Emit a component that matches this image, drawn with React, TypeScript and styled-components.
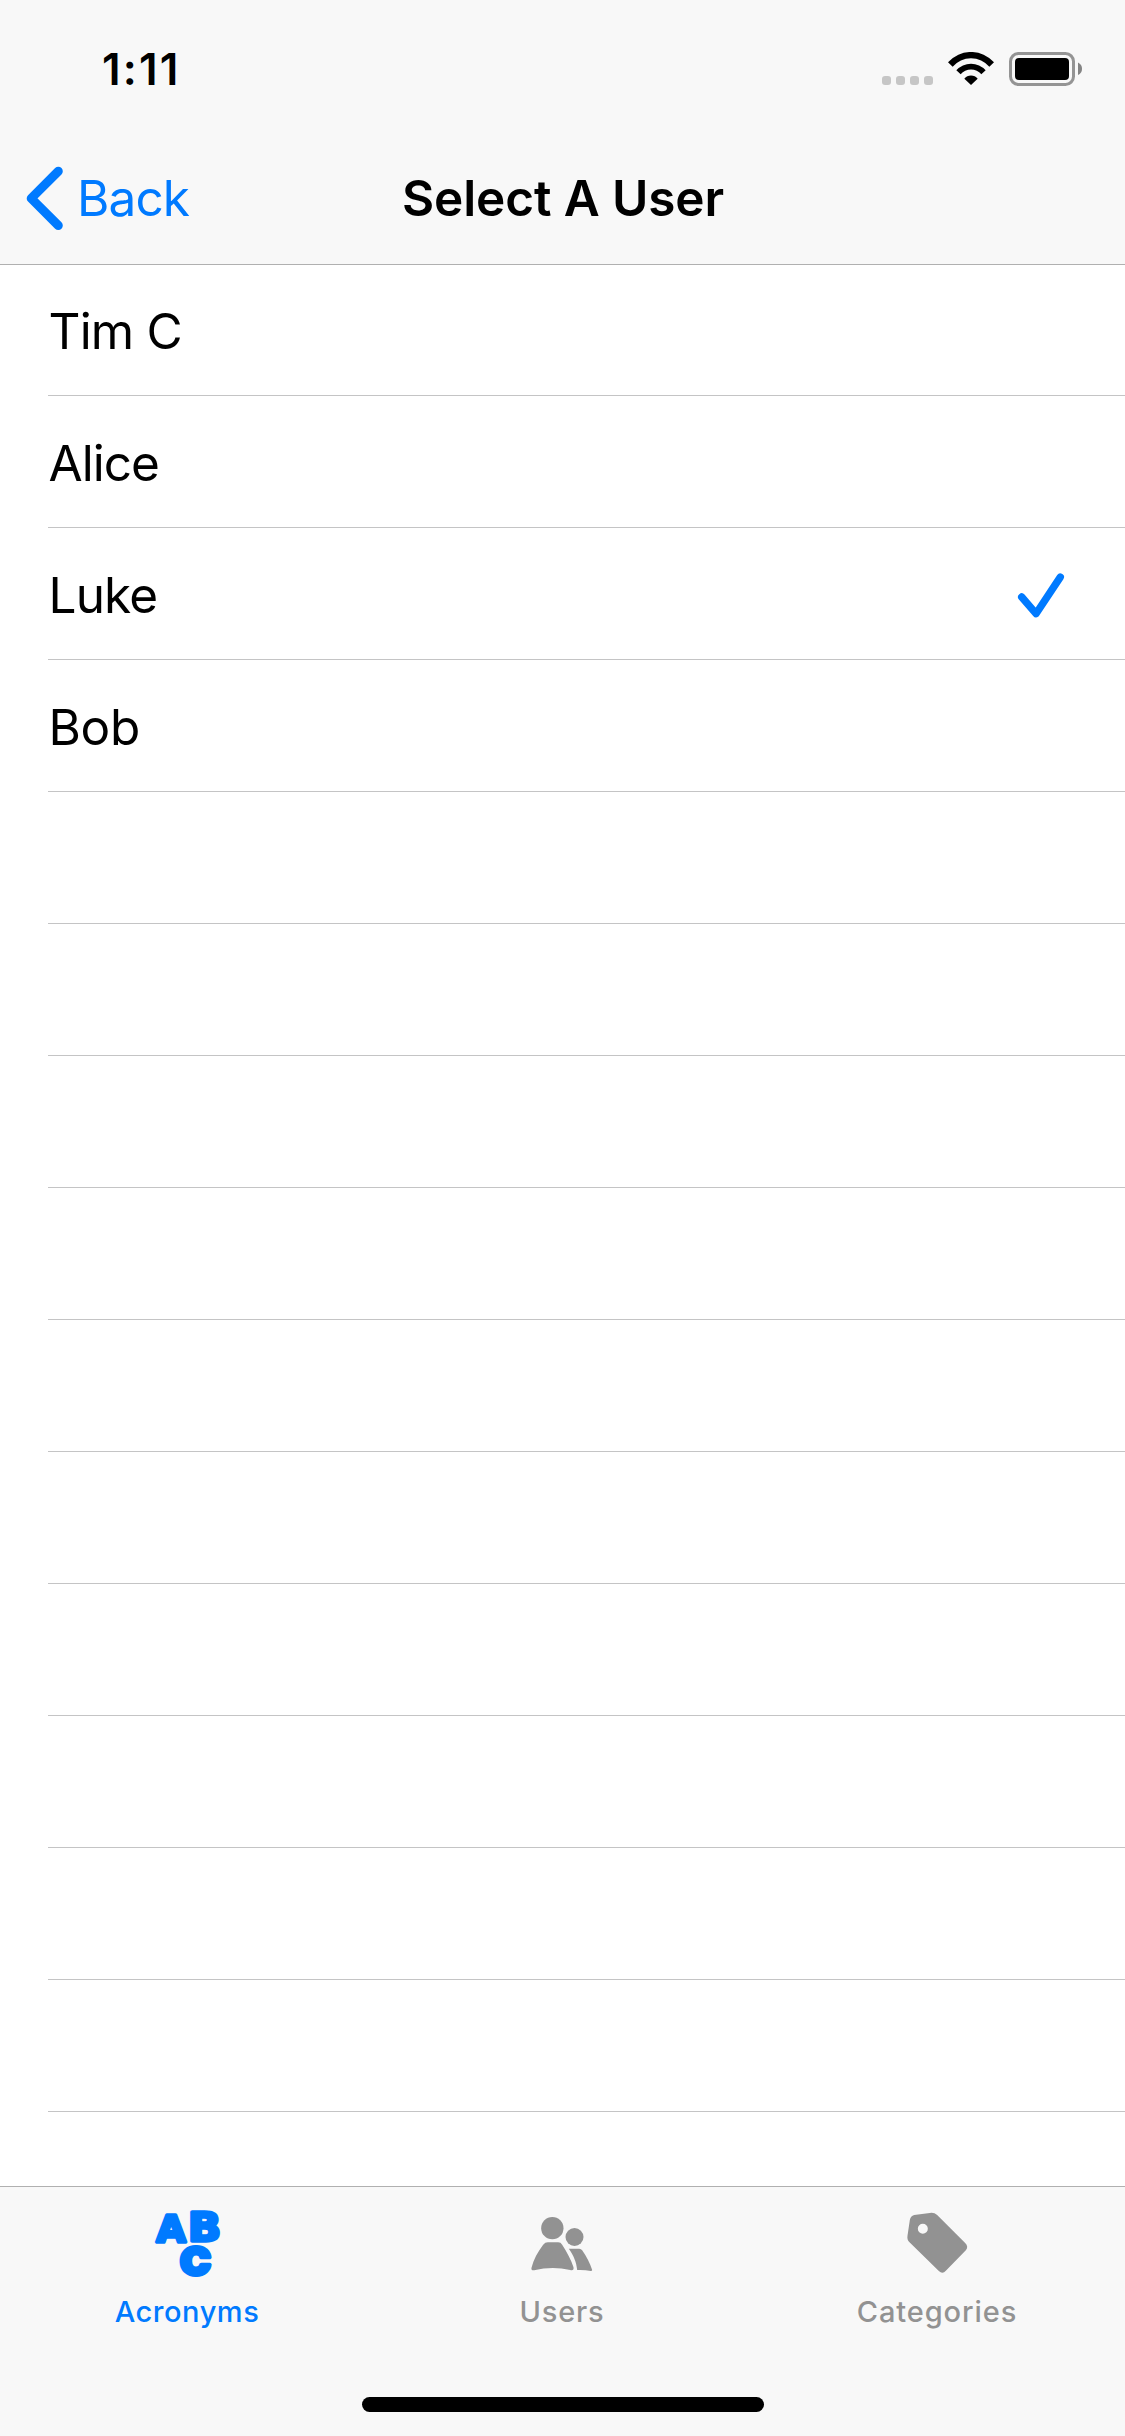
import React from 'react';
import styled, { createGlobalStyle } from 'styled-components';

const BLUE = '#007aff';
const GRAY = '#929292';
const BAR = '#f8f8f8';
const BAR_EDGE = '#b0b0b0';

const GlobalStyle = createGlobalStyle`
  *, *::before, *::after { box-sizing: border-box; }
  body { margin: 0; background: #fff; }
`;

const Screen = styled.div`
  display: flex;
  flex-direction: column;
  width: 1125px;
  height: 2436px;
  overflow: hidden;
  background: #fff;
  color: #000;
  font-family: Inter, 'Liberation Sans', sans-serif;
`;

const Header = styled.header`
  flex: none;
  height: 264px;
  background: ${BAR};
  box-shadow: 0 1px 0 ${BAR_EDGE};
`;

const StatusBar = styled.div`
  display: flex;
  justify-content: space-between;
  height: 132px;
  padding: 52px 43px 0 102px;
`;

const Time = styled.time`
  height: 34px;
  font-size: 44px;
  font-weight: 600;
  line-height: 34px;
  letter-spacing: 2.2px;
`;

const StatusIcons = styled.div`
  display: flex;
  height: 34px;
`;

const SignalDots = styled.div`
  display: flex;
  gap: 5px;
  margin: 24px 15px 0 0;
`;

const Dot = styled.span`
  width: 9px;
  height: 9px;
  border-radius: 3px;
  background: #c6c6c6;
`;

const Wifi = styled.svg`
  width: 46px;
  height: 33px;
  margin-right: 15px;
`;

const Battery = styled.svg`
  width: 73px;
  height: 34px;
`;

const NavBar = styled.nav`
  display: grid;
  grid-template-columns: 1fr auto 1fr;
  align-items: center;
  height: 132px;
`;

const BackButton = styled.button`
  display: flex;
  align-items: center;
  justify-self: start;
  gap: 14px;
  height: 132px;
  padding: 0 0 0 26px;
  border: 0;
  background: none;
  color: ${BLUE};
  font: 400 49.5px/60px Inter, 'Liberation Sans', sans-serif;
  letter-spacing: -0.9px;
`;

const Chevron = styled.svg`
  width: 37px;
  height: 64px;
`;

const Title = styled.h1`
  margin: 0;
  padding-left: 1px;
  font-size: 49.5px;
  font-weight: 600;
  line-height: 60px;
  letter-spacing: -0.1px;
`;

const List = styled.ul`
  flex: 1;
  min-height: 0;
  margin: 0;
  padding: 0 0 0 48px;
  list-style: none;
  overflow: hidden;
`;

const Row = styled.li`
  display: flex;
  align-items: center;
  justify-content: space-between;
  height: 132px;
  padding: 3px 60px 0 0;
  border-bottom: 1px solid #c4c4c5;
`;

const Name = styled.span<{ $tracking: number }>`
  padding-left: 0.5px;
  font-size: 49.5px;
  line-height: 60px;
  letter-spacing: ${(p) => p.$tracking}px;
`;

const Check = styled.svg`
  width: 48px;
  height: 46px;
  margin-top: 1px;
`;

const TabBar = styled.footer`
  display: flex;
  flex: none;
  flex-direction: column;
  align-items: center;
  height: 250px;
  border-top: 1px solid ${BAR_EDGE};
  background: ${BAR};
`;

const Tabs = styled.div`
  display: grid;
  grid-template-columns: repeat(3, 375px);
  height: 210px;
`;

const Tab = styled.button<{ $active?: boolean }>`
  display: flex;
  flex-direction: column;
  align-items: center;
  gap: 13px;
  padding: 22px 0 0;
  border: 0;
  background: none;
  color: ${(p) => (p.$active ? BLUE : GRAY)};
`;

const TabIcon = styled.svg`
  width: 72px;
  height: 72px;
  overflow: visible;
  fill: currentColor;
`;

const TabLabel = styled.span<{ $tracking: number }>`
  padding-right: 1px;
  font: 500 29px/35px Inter, 'Liberation Sans', sans-serif;
  letter-spacing: ${(p) => p.$tracking}px;
`;

const Letter = styled.text<{ $face: string }>`
  font-family: ${(p) => p.$face}, sans-serif;
  font-weight: 900;
  text-anchor: middle;
  stroke: currentColor;
  stroke-linejoin: round;
`;

const HomeIndicator = styled.div`
  width: 402px;
  height: 15px;
  margin-left: 1px;
  border-radius: 8px;
  background: #000;
`;

const users = [
  { name: 'Tim C', tracking: -0.8 },
  { name: 'Alice', tracking: -1 },
  { name: 'Luke', tracking: -0.85, selected: true },
  { name: 'Bob', tracking: -0.3 },
];

const EMPTY_ROWS = 10;

export default function App() {
  return (
    <Screen>
      <GlobalStyle />
      <Header>
        <StatusBar>
          <Time>1:11</Time>
          <StatusIcons>
            <SignalDots>
              <Dot />
              <Dot />
              <Dot />
              <Dot />
            </SignalDots>
            <Wifi viewBox="0 0 138 99">
              <path d="M0 31A92 92 0 0 1 138 31L124 44A72 72 0 0 0 14 44Z" />
              <path d="M25 55A59 59 0 0 1 113 55L100 67A40 40 0 0 0 38 67Z" />
              <path d="M49 80A26 26 0 0 1 89 80L69 99Z" />
            </Wifi>
            <Battery viewBox="0 0 73 34">
              <rect x="1.5" y="1.5" width="63" height="31" rx="8" fill="none" stroke="#949494" strokeWidth="3" />
              <rect x="6" y="6" width="54" height="22" rx="4" />
              <path d="M69 10.5Q73 12.5 73 16.7Q73 21 69 23Z" fill="#848484" />
            </Battery>
          </StatusIcons>
        </StatusBar>
        <NavBar>
          <BackButton>
            <Chevron viewBox="0 0 37 64" fill="none" stroke="currentColor" strokeWidth="9" strokeLinecap="round" strokeLinejoin="round">
              <path d="M32.3 5.3L5.2 32.4L32.3 59.5" />
            </Chevron>
            Back
          </BackButton>
          <Title>Select A User</Title>
        </NavBar>
      </Header>

      <List>
        {users.map((user) => (
          <Row key={user.name}>
            <Name $tracking={user.tracking}>{user.name}</Name>
            {user.selected && (
              <Check viewBox="0 0 48 46" fill="none" stroke={BLUE} strokeWidth="7.4" strokeLinecap="round" strokeLinejoin="round">
                <path d="M4.7 24L19 40.7L43.3 4.1" />
              </Check>
            )}
          </Row>
        ))}
        {Array.from({ length: EMPTY_ROWS }, (_, i) => (
          <Row key={i} />
        ))}
      </List>

      <TabBar>
        <Tabs>
          <Tab $active>
            <TabIcon viewBox="184.5 87 216 216">
              <Letter $face="'DejaVu Sans'" transform="translate(241.5 185)" fontSize="113" strokeWidth="11">A</Letter>
              <Letter $face="'DejaVu Sans'" transform="translate(342 182) scale(1.13 1)" fontSize="115" strokeWidth="10">B</Letter>
              <Letter $face="Inter" transform="translate(315 284) scale(1.08 1)" fontSize="113" strokeWidth="12">C</Letter>
            </TabIcon>
            <TabLabel $tracking={0.54}>Acronyms</TabLabel>
          </Tab>
          <Tab>
            <TabIcon viewBox="79.5 87 216 216">
              <circle cx="155.5" cy="144.5" r="33.5" />
              <circle cx="222" cy="171" r="27" />
              <path d="M142 187H173Q181 187 185 194C200 217 212 240 219 262Q221 273 209 270Q155 258 101 271Q91 272 93 263C99 238 112 215 128 194Q134 187 142 187Z" />
              <path d="M205 206H236Q242 206 245 211C258 230 269 250 275 270Q275 273 271 273Q252 269 230 270C228 246 219 226 205 206Z" />
            </TabIcon>
            <TabLabel $tracking={0.8}>Users</TabLabel>
          </Tab>
          <Tab>
            <TabIcon viewBox="184.5 87 216 216">
              <path
                fillRule="evenodd"
                d="M208 120Q210 108 221 105L268 99Q281 97 290 105L374 189Q385 200 376 211L316 272Q306 284 295 273L207 187Q199 179 201 167ZM232 146a15 15 0 1 0 30 0a15 15 0 1 0-30 0Z"
              />
            </TabIcon>
            <TabLabel $tracking={0.9}>Categories</TabLabel>
          </Tab>
        </Tabs>
        <HomeIndicator />
      </TabBar>
    </Screen>
  );
}
